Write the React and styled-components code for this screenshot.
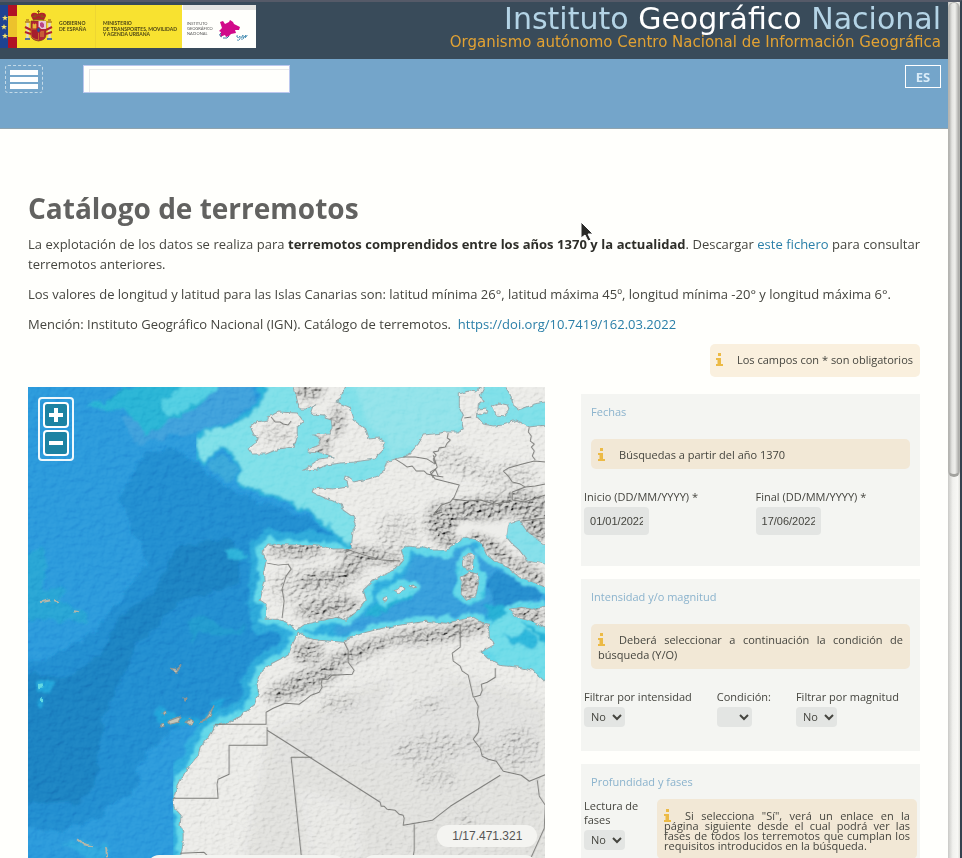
import React from "react";
import styled, { createGlobalStyle } from "styled-components";

const GlobalStyle = createGlobalStyle`
  *, *::before, *::after { box-sizing: border-box; }
  body { margin: 0; overflow: hidden; background: #fffffc; color: #45453f; font-family: "Open Sans", sans-serif; font-size: 13px; line-height: 20px; }
  button, input, select { font: inherit; color: inherit; margin: 0; }
  h1, h2, p { margin: 0; }
  a { color: #2a7fa8; text-decoration: none; }
`;

const Shell = styled.div`
  display: flex;
  height: 100vh;
  overflow: hidden;
  border-top: 2px solid #555a68;
  border-right: 2px solid #35414f;
`;

const Page = styled.div`
  flex: 1;
  min-width: 0;
  overflow: hidden;
`;

const ScrollTrack = styled.div`
  width: 12px;
  background: linear-gradient(90deg, #c9c9c6, #f1f1ee 40%, #f8f8f5 80%, #deded9);
`;

const ScrollThumb = styled.div`
  height: 475px;
  border-radius: 6px;
  border: 1px solid #b4b4b0;
  border-bottom: 3px solid #a2a29e;
  background: linear-gradient(90deg, #b0b0ad, #e4e4e1 30%, #efefec 60%, #a5a5a2);
`;

const Header = styled.header`
  display: flex;
  justify-content: space-between;
  height: 57px;
  padding: 0 7px 0 0;
  background: #394b5a;
`;

const LogoLink = styled.a`
  display: block;
  width: 256px;
  height: 43px;
  margin-top: 3px;
`;

const Brand = styled.div`
  text-align: right;
  font-family: "DejaVu Sans", sans-serif;
  white-space: nowrap;
`;

const BrandName = styled.div`
  font-size: 30px;
  line-height: 34px;
  color: #b4d4e6;
  strong { font-weight: 400; color: #fff; }
`;

const BrandSub = styled.div`
  margin-top: -2px;
  font-size: 15px;
  line-height: 17px;
  color: #e2a233;
`;

const Toolbar = styled.div`
  display: flex;
  align-items: flex-start;
  height: 70px;
  padding: 6px 7px 0 5px;
  background: #74a5ca;
  border-bottom: 1px solid #8fa3ae;
`;

const MenuButton = styled.button`
  display: flex;
  flex-direction: column;
  justify-content: center;
  gap: 2px;
  width: 38px;
  height: 28px;
  padding: 0 4px;
  border: 1px dashed #c4dae8;
  border-radius: 3px;
  background: none;
`;

const MenuBar = styled.span`
  height: 5px;
  background: #fff;
`;

const SearchInput = styled.input`
  width: 207px;
  height: 28px;
  margin-left: 40px;
  padding: 0 8px;
  border: 1px solid #bcc8ee;
  background: #fffffc;
  box-shadow: inset 5px 3px 0 #fffffc, inset 6px 4px 0 #e9e9e9;
`;

const LangButton = styled.button`
  width: 36px;
  height: 23px;
  margin-left: auto;
  padding: 0;
  border: 1px solid #fff;
  background: none;
  color: #d9ecf8;
  font-size: 13px;
  font-weight: 700;
  line-height: 20px;
`;

const Main = styled.main`
  padding: 59px 28px 0;
`;

const Title = styled.h1`
  margin-bottom: 6px;
  font-size: 28px;
  line-height: 40px;
  font-weight: 700;
  color: #626260;
`;

const Paragraph = styled.p`
  margin-bottom: 10px;
  text-align: justify;
  strong { color: #2e2e29; }
`;

const NoteBox = styled.p`
  padding: ${(p) => (p.$dense ? "12px 7px 8px" : "8px 7px 7px")};
  border-radius: 5px;
  background: #f2e8d6;
  font-size: 11px;
  line-height: ${(p) => (p.$dense ? "10px" : "15px")};
  text-align: justify;
`;

const RequiredNote = styled(NoteBox)`
  width: fit-content;
  margin-left: auto;
  padding: 8px 7px 10px 6px;
  background: #faf0de;
`;

const InfoSvg = styled.svg`
  width: 7px;
  height: 13px;
  margin: -9px 14px -5px 0;
  vertical-align: middle;
`;

const Columns = styled.div`
  display: grid;
  grid-template-columns: 58% 38%;
  justify-content: space-between;
  align-items: start;
  margin-top: 10px;
`;

const MapFrame = styled.div`
  position: relative;
  overflow: hidden;
`;

const MapSvg = styled.svg`
  display: block;
  width: 100%;
`;

const ZoomControls = styled.div`
  position: absolute;
  left: 10px;
  top: 10px;
  display: grid;
  gap: 2px;
  padding: 3px;
  border: 2px solid #eef8fc;
  border-radius: 4px;
`;

const ZoomButton = styled.button`
  display: grid;
  place-items: center;
  width: 26px;
  height: 26px;
  padding: 0;
  border: 2px solid #fff;
  border-radius: 4px;
  background: #1d83a3;
`;

const MapFooter = styled.div`
  position: absolute;
  left: 119px;
  right: 8px;
  bottom: 8px;
  display: grid;
  grid-template-columns: 1fr 175px;
  gap: 8px 17px;
`;

const Pill = styled.div`
  height: 24px;
  border-radius: 12px;
  background: #f4f4f1;
`;

const ScalePill = styled(Pill)`
  grid-column: 1 / -1;
  justify-self: end;
  width: 100px;
  height: 22px;
  font: 12px/22px "Liberation Sans", sans-serif;
  text-align: center;
  color: #555;
`;

const Form = styled.form`
  display: grid;
  gap: 13px;
  margin-top: 7px;
`;

const Panel = styled.section`
  min-height: 172px;
  padding: 10px;
  background: #f4f5f2;
  font-size: 11px;
  line-height: 16px;
`;

const PanelTitle = styled.h2`
  margin-bottom: ${(p) => (p.$tight ? "9px" : "19px")};
  font-size: 11px;
  line-height: 16px;
  font-weight: 400;
  color: #8bb3cd;
`;

const Fields = styled.div`
  display: flex;
  gap: 25px;
  margin: 20px -7px 0;
  white-space: nowrap;
`;

const DateFields = styled(Fields)`
  display: grid;
  grid-template-columns: 1fr 1fr;
  gap: 10px;
`;

const PhaseRow = styled.div`
  display: grid;
  grid-template-columns: 60px 1fr;
  gap: 13px;
  margin: 0 -7px;
`;

const Field = styled.label`
  display: grid;
  justify-items: start;
  align-content: start;
  gap: 2px;
`;

const PhaseField = styled(Field)`
  line-height: 14px;
  gap: 3px;
`;

const DateInput = styled.input`
  width: 65px;
  height: 28px;
  padding: 0 6px;
  border: 0;
  border-radius: 4px;
  background: #e3e5e3;
  font-family: "Liberation Sans", sans-serif;
  font-size: 11px;
`;

const Select = styled.select`
  width: ${(p) => p.$width};
  height: 20px;
  padding: 0 3px 1px;
  border: 0;
  border-radius: 4px;
  background: #e3e5e3;
  font-size: 11px;
`;

const Pointer = styled.svg`
  position: fixed;
  left: 579px;
  top: 221px;
  width: 14px;
  height: 22px;
  pointer-events: none;
`;

const InfoIcon = () => (
  <InfoSvg viewBox="0 0 7 13" aria-hidden="true">
    <path d="M2 0h3v3H2zM0 5h5v6h2v2H0v-2h1.500V7H0z" fill="#ecba45" />
  </InfoSvg>
);

const Note = ({ children, dense }) => (
  <NoteBox $dense={dense}><InfoIcon />{children}</NoteBox>
);

const STAR = "M0-3 .8-1 3-1 1.200.400 1.900 2.600 0 1.300-1.900 2.600-1.200.400-3-1-.8-1z";

const Logo = () => (
  <svg viewBox="0 0 256 43" width="256" height="43" role="img" aria-label="Gobierno de España. Instituto Geográfico Nacional">
    <rect width="182" height="43" fill="#f8e230" />
    <rect width="8" height="43" fill="#1f4392" />
    <rect x="8" width="9" height="43" fill="#b01225" />
    <rect x="8" y="11" width="9" height="21" fill="#ecc22c" />
    <g fill="#f6e36a">
      <path d={STAR} transform="translate(5 13)" />
      <path d={STAR} transform="translate(4 22)" />
      <path d={STAR} transform="translate(5 31)" />
    </g>
    <g>
      <path d="M31 11c0-4 4-4 7-2 3-2 8-2 8 2l-2 4H33z" fill="#b3202c" />
      <path d="M38.500 5v4M37 6.500h3M32 12q6.500-3 13 0M33 15q6-2 11 0M35 9v4M42 9v4" stroke="#8a5b14" fill="none" />
      <path d="M31 16h15v14q0 5-7.500 6-7.500-1-7.500-6z" fill="#b22435" stroke="#7c3a1c" strokeWidth=".7" />
      <path d="M38.500 16H46v8h-7.500z" fill="#e9c7d8" />
      <path d="M40 18l2-1 2 2v3l-2 1-2-2z" fill="#b84485" />
      <path d="M33 23v-4h1v1h1v-1h1v4zM40 27h4M40 29h4M40 31h4" stroke="#e8b83a" fill="#e8b83a" strokeWidth=".8" />
      <path d="M31 24h7.500v11q-7-1-7.500-5z" fill="#a61e2e" stroke="#d69a29" strokeWidth=".6" />
      <ellipse cx="38.500" cy="25" rx="2" ry="2.500" fill="#244f96" stroke="#b3202c" />
      <path d="M27.500 17v16M49.500 17v16" stroke="#ded8c5" strokeWidth="2.500" />
      <path d="M25 22l6 3M25 27l6 2M46 25l6-3M46 29l6-2" stroke="#b3202c" strokeWidth="2" />
      <path d="M25 17h5M47 17h5M26 15h3M48 15h3" stroke="#b37b20" strokeWidth="1.500" />
      <path d="M25 34h5M47 34h5" stroke="#55749a" strokeWidth="2" />
    </g>
    <path d="M95.500 0v43" stroke="#eed632" />
    <g fill="#4a4315" fontFamily="Lato, sans-serif" fontWeight="700" fontSize="5">
      <text x="59" y="20">GOBIERNO</text>
      <text x="59" y="26">DE ESPAÑA</text>
      <text x="103" y="20">MINISTERIO</text>
      <text x="103" y="26">DE TRANSPORTES, MOVILIDAD</text>
      <text x="103" y="31">Y AGENDA URBANA</text>
    </g>
    <rect x="182" width="74" height="43" fill="#fffffc" />
    <rect x="183" width="73" height="5" fill="#e4e4e1" />
    <g fill="#555" fontFamily="Lato, sans-serif" fontSize="4">
      <text x="187" y="20">INSTITUTO</text>
      <text x="187" y="25">GEOGRÁFICO</text>
      <text x="187" y="30">NACIONAL</text>
    </g>
    <path d="M220 17l3-1 2 3 4-2 1-2 3 2 1 2 6 3-1 3-4 0 1 3-5 1-2 2-3 1-1-2-5 2 1-5-2-1 3-3z" fill="#d10a8a" />
    <path d="M222 32q-4-2-1-4M223 33q5 1 6-2" stroke="#3f77a0" fill="none" />
    <path d="M238 31q-2-1-1 1t3-1v3q-1 2-3 1M241 33l2-3v3l3-3-1 3q3-3 2-3M244 33q-2 2-3 1" stroke="#478db2" fill="none" strokeWidth=".9" />
  </svg>
);

const EUROPE = "M458-4L452 8 455 14 450 18 449 30 455 37 465 39 475 38 488 33 501 40 517 38 521 38V158L517 158 507 151 498 143 491 133 480 136 478 150 484 157 491 163 499 174 517 177 521 177V200L517 200 505 195 491 190 475 177 466 174 458 167 453 156 450 153 438 150 425 157 418 163 405 163 396 160 388 160 380 159 373 163 376 172 368 182 355 188 345 193 335 203 338 213 330 223 318 233 308 230 290 234 277 237 268 243 258 235 250 232 237 232 238 217 232 213 235 200 237 193 236 183 238 173 233 165 240 157 258 158 275 158 291 159 305 162 318 162 323 162 324 151 325 143 328 137 325 130 315 123 313 117 301 113 290 108 284 105 285 102 295 101 305 102 320 100 319 94 316 92 317 89 325 95 340 92 349 89 355 85 358 75 367 72 375 70 382 66 390 57 395 48 406 47 418 45 429 45 435 42 433 33 435 28 431 20 431 7 440 4 447 5z";
const BRITAIN = "M265-4H318L312 12 308 15 321 20 325 33 338 43 341 52 350 51 357 55 355 63 346 72 326 75 313 76 298 78 290 82 276 83 284 77 291 72 305 70 295 66 280 65 282 62 290 58 292 52 285 48 301 47 304 40 303 33 297 31 297 28 283 27 286 18 278 22 271 22z";
const IRELAND = "M250 25L240 30 240 33 229 35 222 40 226 48 230 50 226 57 220 62 224 67 238 67 250 62 266 60 269 50 269 39 275 34 269 26z";
const AFRICA = "M270 245L280 251 291 253 315 255 326 249 338 245 354 241 371 238 398 234 418 236 445 230 455 236 460 237 461 250 465 258 453 265 459 271 471 278 490 280 505 283 517 295 521 297V504H152V471L155 457 155 445 152 438 153 428 146 420 145 412 149 400 153 392 160 380 170 368 172 360 180 350 187 338 200 336 213 328 226 318 230 307 228 297 233 285 242 277 260 268 264 258z";
const ISLANDS = "M433 190l9-5 7 2 1 9-3 14-9 3-5-6zM436 170l6-5 3 3-1 14-5 1-4-6zM366 203l7-4 3 3-6 4zM381 199l5-1 2 2-4 1zM354 211l4-2 1 3-3 2zM481 222l12-2 11 2 13-3v22l-14-7-14-4z";
const SCANDIA = "M475-4L482 8 485 18 491 23 506 17 517 15 521 15V-4zM464 19l7-3 8 2 2 5-5 6-8-1zM450 22l7-1 2 5-6 2-4-3z";
const CANARIES = "M134 326l2-2 2 2-2 2zM132 337l3-1 1 3-3 1zM140 334l5-2 8-3-3 6-8 2zM158 335l4-3 3 2-3 4zM171 335l6-2-3 2zM175 334l5-6 6-10-4 11zM142 281l7 1 4-4-5 7zM156 311l2 1-1 1z";
const LAND = EUROPE + BRITAIN + IRELAND + AFRICA + ISLANDS + SCANDIA;

const BORDERS = [
  "M239 176l11 2 10-1 3 5-5 7-4 13 2 12-2 17",
  "M318 162l18 6 18 5 18 1",
  "M367 72l8 5 4 3 5-1 4 5 8 0 3 3 9 2 7 1M375 70l12 0 12 2 8 5",
  "M407 77l-2-5 3-4-3-3 5-1 1-3 6-1 2-4 3-3-3-2 1-5M405 68l4 12-6 7 4 5 12 3 12 3-5 12-4 5-9 3-8 10 9-3",
  "M410 89l-3-7-5 3 3 6M424 112l16 2 12-1 14 4 18-3M484 113l0-8 13-5-5-3-8-2-4-6-5-5 5-3 14-4 12-3 11 1",
  "M501 40l-1 5 3 4-1 5 4 3-3 3 3 4-2 5 3 4M497 100l10-1 10-2M484 113l12 2 21-7M493 134l24-3",
  "M436 31l7-1M263 34l-3 4-5-1-3-2-5 0-4-5",
  "M316 255l4 8 0 12 6 8-2 4-20 1-4 4-6 0-1 5 1 3-3 5-8 3-5 4-7 5-14-1-12 5-7 4v12h-51",
  "M239 343l19 12 94 60 1 4 3 0 3 3 8 1 4 4 4 1 1 3-1 7 29-5 18-14 50-31",
  "M239 340v18h-38v29l-11 5-1 5 1 14h-45",
  "M284 370h-21l10 97 8 33M386 437v26l-6 35",
  "M432 237l0 23-8 6 1 8 7 5 2 5 6 4 5 22 7-2 2-5-1-6 6-2 8-5v-9",
  "M446 311l4 8-1 8 2 8-1 10-5 7 7 9 2 8 6 3 8 2 7 10 18 4 8 6 17-7",
  "M509 393l2 16 6 9-1 23-14 31",
  "M152 466l24-1 7 7",
];

const MOUNTAINS = [
  [415, 138, 14, 22, -20], [455, 122, 40, 11, -5], [495, 118, 26, 12, 0], [340, 168, 34, 6, 10],
  [268, 163, 28, 6, 0], [288, 193, 18, 5, -15], [318, 185, 20, 8, -30],
  [300, 221, 32, 7, -10], [463, 160, 28, 6, 40], [500, 185, 20, 6, 35], [508, 140, 12, 14, 0],
  [280, 3, 14, 8, 0], [309, 34, 5, 14, 0], [294, 57, 7, 8, 0], [280, 265, 14, 10, 0],
  [275, 296, 40, 9, -22], [330, 265, 40, 6, -22], [400, 248, 45, 6, -5], [440, 240, 20, 6, 0],
  [440, 196, 8, 15, 0], [440, 174, 4, 8, 0], [500, 228, 18, 6, 0],
];

const HILLS = [
  [402, 362, 36, 14, -5], [408, 390, 20, 10, 0], [438, 435, 7, 9, 0], [465, 365, 34, 8, 30],
  [430, 75, 26, 14, 20], [370, 145, 22, 20, 0], [480, 90, 30, 14, 0], [280, 200, 40, 20, 0],
  [400, 318, 16, 6, 0], [310, 315, 20, 10, 0], [490, 360, 20, 20, 0], [250, 48, 18, 12, 0],
];

const Ridges = ({ items }) => items.map(([x, y, rx, ry, r]) => (
  <ellipse key={`${x}-${y}`} cx={x} cy={y} rx={rx} ry={ry} transform={`rotate(${r} ${x} ${y})`} />
));

const ReliefMap = () => (
  <MapSvg viewBox="0 0 517 500" role="img" aria-label="Mapa de relieve de Europa occidental y norte de África">
    <defs>
      <clipPath id="land"><path d={LAND} /></clipPath>
      <filter id="soft" x="-20%" y="-20%" width="140%" height="140%"><feGaussianBlur stdDeviation="4" /></filter>
      <filter id="smooth"><feGaussianBlur stdDeviation="2" /></filter>
      <filter id="edge" x="0" y="0" width="100%" height="100%">
        <feTurbulence type="fractalNoise" baseFrequency=".08" numOctaves="5" seed="5" result="n" />
        <feDisplacementMap in="SourceGraphic" in2="n" scale="12" xChannelSelector="R" yChannelSelector="G" />
        <feGaussianBlur stdDeviation=".8" />
      </filter>
      <filter id="coast" x="0" y="0" width="100%" height="100%" colorInterpolationFilters="sRGB">
        <feTurbulence type="fractalNoise" baseFrequency=".15" numOctaves="2" seed="8" result="n" />
        <feDisplacementMap in="SourceGraphic" in2="n" scale="4" xChannelSelector="R" yChannelSelector="G" />
      </filter>
      <filter id="seabed" x="0" y="0" width="100%" height="100%">
        <feTurbulence type="fractalNoise" baseFrequency=".12 .16" numOctaves="4" seed="3" result="n" />
        <feColorMatrix in="n" type="matrix" values="0 0 0 0 0 0 0 0 0 0 0 0 0 0 0 1 0 0 0 0" />
        <feDiffuseLighting surfaceScale="2" lightingColor="#fff"><feDistantLight azimuth="225" elevation="50" /></feDiffuseLighting>
        <feComponentTransfer colorInterpolationFilters="sRGB">
          <feFuncR type="linear" slope="1.200" intercept="-.54" />
          <feFuncG type="linear" slope="1.200" intercept="-.54" />
          <feFuncB type="linear" slope="1.200" intercept="-.54" />
        </feComponentTransfer>
      </filter>
      <filter id="relief" x="0" y="0" width="100%" height="100%">
        <feTurbulence type="fractalNoise" baseFrequency=".22 .28" numOctaves="4" seed="12" result="n" />
        <feColorMatrix in="n" type="matrix" values="0 0 0 0 0 0 0 0 0 0 0 0 0 0 0 1 0 0 0 0" />
        <feDiffuseLighting surfaceScale="4" lightingColor="#dadad7"><feDistantLight azimuth="225" elevation="50" /></feDiffuseLighting>
      </filter>
      <mask id="mountains">
        <rect width="517" height="500" fill="#181818" />
        <g filter="url(#soft)">
          <g fill="#555"><Ridges items={HILLS} /></g>
          <g fill="#ddd"><Ridges items={MOUNTAINS} /></g>
        </g>
      </mask>
    </defs>

    <rect width="517" height="500" fill="#2c9bdc" />
    <g filter="url(#edge)">
      <path d="M117 66L143 62 162 72 176 84 205 104 225 112 290 135 320 158 238 155 230 168 232 220 260 250 232 280 226 308 185 332 154 340 132 352 112 375 108 400 70 430 30 445-20 440V280L25 270 65 245 90 215 120 175 90 110z" fill="#218fd1" />
      <path d="M150 160L205 150 212 170 210 195 185 205 160 210 125 240 108 262 92 292 78 322 70 365 68 400 50 415 0 418-20 380V285L40 290 75 265 90 232 125 205z" fill="#1e84c3" />
      <path d="M90 30L107 56 155 48 180 45 205 35 228 16 226-5H180L150 20z" fill="#40a2dc" />
      <path d="M55 20L75 14 92 6 112-6H205L190 0 170 20 150 30 116 48 104 26z" fill="#29b5d6" />
      <path d="M135 12L150 4 160-6H200L180 9 150 26 138 30 134 20z" fill="#53cfe3" />
      <path d="M-10 180L14 158 20 180 14 205 35 198 32 212 55 225 60 236 0 232z" fill="#26a9d3" opacity=".75" />
      <path d="M195 165l10-5 12 5-2 8-10 1z" fill="#2fb3da" />
      <path d="M9 298l9-6 8 4-4 7-12 2zM9 312l6-2 2 6-6 3zM128 322l8-3 8 9 30 2 12-16 10-6 4 3-16 25-45 4-8-5z" fill="#23a5da" />
      <path d="M160 233l20-3 18 12 20-4-5 7-24 3-17-7-7 16-4-14z" fill="#219fce" opacity=".7" />
      <path d="M36 456l18-6 14 10 10-5 5 15-20 3z" fill="#33aadf" />
    </g>
    <path d={AFRICA + EUROPE} fill="none" stroke="#34b9e0" strokeWidth="28" strokeLinejoin="round" filter="url(#edge)" opacity=".65" />
    <path d="M305 240L350 222 377 187 385 168 418 168 442 154 454 170 480 185 520 210V230L480 222 450 230 400 235 350 240 310 250z" fill="#39a0dc" filter="url(#smooth)" />
    <g filter="url(#edge)">
      <path d="M455 195L470 185 500 195 515 208 490 219 470 220z" fill="#278fcf" />
      <path d="M340 222L370 207 390 200 380 212 360 221 335 232zM455 220L475 215 490 230 520 240V270L490 265z" fill="#25b0d5" />
      <path d="M427 183l12-15 13 15 5 27-18 11-12-10zM350 205l16-10 18-1 6 5-13 9-18 8z" fill="#48cae3" />
    </g>
    <path d={AFRICA + EUROPE + ISLANDS} fill="none" stroke="#64d8e9" strokeWidth="11" strokeLinejoin="round" filter="url(#edge)" />
    <g filter="url(#edge)">
      <path d="M237-5L230 18 205 38 180 43 168 54 169 72 178 78 192 60 207 68 212 98 262 115 292 132 318 158 330 160 330 125 360 95 390 90 440 50 530 50V-5z" fill="#80e0e9" stroke="#2db6da" strokeWidth="3" />
      <path d="M182 76l12-7 11 6 2 13-9 6-10-6z" fill="#3ba9da" />
      <path d="M455 262L465 237 480 226 520 258V300L480 284z" fill="#70dce9" />
      <path d="M474 245l14 5 10-8 14 12-9 7-18-4z" fill="#2fb8dc" />
    </g>
    <path d="M325-5H435L435 40 380 62 362 72 358 50 340 40z" fill="#93e3ea" filter="url(#smooth)" />
    <path d="M477 133L495 132 520 155V180L498 174 480 153z" fill="#85dfea" />
    <rect width="517" height="500" filter="url(#seabed)" opacity=".3" style={{ mixBlendMode: "soft-light" }} />

    <g filter="url(#coast)">
      <path d={LAND} fill="#f1f1ee" stroke="#99aaac" strokeWidth="1" />
      <path d={CANARIES} fill="#c6c7ba" stroke="#8d9695" strokeWidth="1" />
      <path d="M12 215l10-2M26 213l5 1M45 224l6 1M50 452l6 5 8 2M78 460l1 9" stroke="#b4b6aa" strokeWidth="2" fill="none" />
      <path d="M10 299l5-1M12 313h3" stroke="#64dae3" strokeWidth="4" />
    </g>
    <g clipPath="url(#land)">
      <path d="M330 300Q430 270 520 320V500H210L240 345z" fill="#e4e4e1" opacity=".8" filter="url(#soft)" />
      <path d="M370 260Q410 248 422 260L420 300 350 340zM270 400l60 20 5 70h-50z" fill="#eeeeeb" filter="url(#soft)" />
      <g filter="url(#soft)" opacity=".35" fill="#999"><Ridges items={MOUNTAINS} /></g>
      <g mask="url(#mountains)">
        <rect width="517" height="500" filter="url(#relief)" />
      </g>
      <path d="M423 145l12-11 18 3 17 1 15-7-5 20-18-3-18-4-12 6z" fill="#ededea" filter="url(#smooth)" />
    </g>
    <g fill="none" stroke="#7d7d7a" strokeWidth="1" strokeLinejoin="round">
      {BORDERS.map((d) => <path key={d} d={d} />)}
    </g>
  </MapSvg>
);

const YesNo = () => (
  <>
    <option>No</option>
    <option>Sí</option>
  </>
);

export default function App() {
  return (
    <>
      <GlobalStyle />
      <Shell>
        <Page>
          <Header>
            <LogoLink href="#inicio"><Logo /></LogoLink>
            <Brand>
              <BrandName>Instituto <strong>Geográfico</strong> Nacional</BrandName>
              <BrandSub>Organismo autónomo Centro Nacional de Información Geográfica</BrandSub>
            </Brand>
          </Header>
          <Toolbar>
            <MenuButton type="button" aria-label="Menú"><MenuBar /><MenuBar /><MenuBar /></MenuButton>
            <SearchInput type="text" aria-label="Buscar" />
            <LangButton type="button">ES</LangButton>
          </Toolbar>
          <Main>
            <Title>Catálogo de terremotos</Title>
            <Paragraph>
              La explotación de los datos se realiza para <strong>terremotos comprendidos entre los años 1370 y la actualidad</strong>. Descargar <a href="#fichero">este fichero</a> para consultar terremotos anteriores.
            </Paragraph>
            <Paragraph>
              Los valores de longitud y latitud para las Islas Canarias son: latitud mínima 26°, latitud máxima 45º, longitud mínima -20° y longitud máxima 6°.
            </Paragraph>
            <Paragraph>
              Mención: Instituto Geográfico Nacional (IGN). Catálogo de terremotos.&nbsp; <a href="https://doi.org/10.7419/162.03.2022">https://doi.org/10.7419/162.03.2022</a>
            </Paragraph>
            <RequiredNote><InfoIcon />Los campos con * son obligatorios</RequiredNote>
            <Columns>
              <MapFrame>
                <ReliefMap />
                <ZoomControls>
                  <ZoomButton type="button" aria-label="Acercar">
                    <svg width="14" height="14" viewBox="0 0 14 14"><path d="M7 0v14M0 7h14" stroke="#fff" strokeWidth="4" /></svg>
                  </ZoomButton>
                  <ZoomButton type="button" aria-label="Alejar">
                    <svg width="14" height="14" viewBox="0 0 14 14"><path d="M0 7h14" stroke="#fff" strokeWidth="4" /></svg>
                  </ZoomButton>
                </ZoomControls>
                <MapFooter>
                  <ScalePill>1/17.471.321</ScalePill>
                  <Pill />
                  <Pill />
                </MapFooter>
              </MapFrame>
              <Form>
                <Panel>
                  <PanelTitle>Fechas</PanelTitle>
                  <Note>Búsquedas a partir del año 1370</Note>
                  <DateFields>
                    <Field>Inicio (DD/MM/YYYY) *<DateInput type="text" defaultValue="01/01/2022" /></Field>
                    <Field>Final (DD/MM/YYYY) *<DateInput type="text" defaultValue="17/06/2022" /></Field>
                  </DateFields>
                </Panel>
                <Panel>
                  <PanelTitle>Intensidad y/o magnitud</PanelTitle>
                  <Note>Deberá seleccionar a continuación la condición de búsqueda (Y/O)</Note>
                  <Fields>
                    <Field>Filtrar por intensidad<Select $width="41px"><YesNo /></Select></Field>
                    <Field>Condición:<Select $width="35px"><option></option><option>Y</option><option>O</option></Select></Field>
                    <Field>Filtrar por magnitud<Select $width="41px"><YesNo /></Select></Field>
                  </Fields>
                </Panel>
                <Panel>
                  <PanelTitle $tight>Profundidad y fases</PanelTitle>
                  <PhaseRow>
                    <PhaseField>Lectura de fases<Select $width="41px"><YesNo /></Select></PhaseField>
                    <Note dense>Si selecciona "Sí", verá un enlace en la página siguiente desde el cual podrá ver las fases de todos los terremotos que cumplan los requisitos introducidos en la búsqueda.</Note>
                  </PhaseRow>
                </Panel>
              </Form>
            </Columns>
          </Main>
        </Page>
        <ScrollTrack><ScrollThumb /></ScrollTrack>
      </Shell>
      <Pointer viewBox="0 0 14 22" aria-hidden="true">
        <path d="M2 1v16l4-3 3 6 3-1-3-6h5z" fill="#292927" stroke="#fff" strokeWidth="1" />
      </Pointer>
    </>
  );
}
